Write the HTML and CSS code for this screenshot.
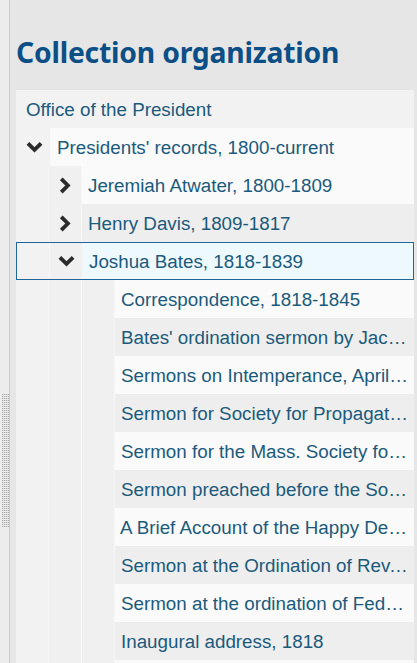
FILE: index.html
```html
<!DOCTYPE html>
<html>
<head>
<meta charset="utf-8">
<link rel="stylesheet" href="styles.css">
</head>
<body>
<div class="layout">
  <div class="gutter"><div class="handle"></div></div>
  <div class="panel">
    <h2 class="title">Collection organization</h2>
    <div class="tree">
      <div class="row level0">
        <div class="label">Office of the President</div>
      </div>
      <div class="row alt-light">
        <div class="cell toggle"><svg viewBox="0 0 16 11" class="chev-down"><path d="M1.8 2 L8 8.2 L14.2 2" /></svg></div>
        <div class="label">Presidents' records, 1800-current</div>
      </div>
      <div class="row alt-light">
        <div class="cell"></div>
        <div class="cell toggle"><svg viewBox="0 0 11 16" class="chev-right"><path d="M2 1.8 L8.2 8 L2 14.2" /></svg></div>
        <div class="label">Jeremiah Atwater, 1800-1809</div>
      </div>
      <div class="row alt-dark">
        <div class="cell"></div>
        <div class="cell toggle"><svg viewBox="0 0 11 16" class="chev-right"><path d="M2 1.8 L8.2 8 L2 14.2" /></svg></div>
        <div class="label">Henry Davis, 1809-1817</div>
      </div>
      <div class="row selected">
        <div class="cell"></div>
        <div class="cell toggle"><svg viewBox="0 0 16 11" class="chev-down"><path d="M1.8 2 L8 8.2 L14.2 2" /></svg></div>
        <div class="label">Joshua Bates, 1818-1839</div>
      </div>
      <div class="row alt-light child">
        <div class="cell"></div><div class="cell"></div><div class="cell"></div>
        <div class="label">Correspondence, 1818-1845</div>
      </div>
      <div class="row alt-dark child">
        <div class="cell"></div><div class="cell"></div><div class="cell"></div>
        <div class="label">Bates' ordination sermon by Jacob Ide, 1818</div>
      </div>
      <div class="row alt-light child">
        <div class="cell"></div><div class="cell"></div><div class="cell"></div>
        <div class="label">Sermons on Intemperance, April 1826</div>
      </div>
      <div class="row alt-dark child">
        <div class="cell"></div><div class="cell"></div><div class="cell"></div>
        <div class="label">Sermon for Society for Propagating the Gospel</div>
      </div>
      <div class="row alt-light child">
        <div class="cell"></div><div class="cell"></div><div class="cell"></div>
        <div class="label">Sermon for the Mass. Society for Promoting Christian Knowledge</div>
      </div>
      <div class="row alt-dark child">
        <div class="cell"></div><div class="cell"></div><div class="cell"></div>
        <div class="label">Sermon preached before the Society for Propagating the Gospel</div>
      </div>
      <div class="row alt-light child">
        <div class="cell"></div><div class="cell"></div><div class="cell"></div>
        <div class="label tight">A Brief Account of the Happy Death of Mary Ann Clap</div>
      </div>
      <div class="row alt-dark child">
        <div class="cell"></div><div class="cell"></div><div class="cell"></div>
        <div class="label">Sermon at the Ordination of Rev. Joseph Torrey</div>
      </div>
      <div class="row alt-light child">
        <div class="cell"></div><div class="cell"></div><div class="cell"></div>
        <div class="label">Sermon at the ordination of Federal Burt</div>
      </div>
      <div class="row alt-dark child">
        <div class="cell"></div><div class="cell"></div><div class="cell"></div>
        <div class="label">Inaugural address, 1818</div>
      </div>
      <div class="row alt-light child">
        <div class="cell"></div><div class="cell"></div><div class="cell"></div>
        <div class="label">Address at funeral, 1820</div>
      </div>
    </div>
  </div>
</div>
</body>
</html>
```

FILE: styles.css
```css
html, body {
  margin: 0;
  padding: 0;
  height: 663px;
  overflow: hidden;
  background: #e6e6e6;
}

.layout {
  display: flex;
  height: 663px;
  overflow: hidden;
}

.gutter {
  width: 10px;
  flex: none;
  background: #ececec;
  border-right: 1px solid #cbcbcb;
  display: flex;
  align-items: flex-start;
  justify-content: center;
  padding-top: 393px;
  box-sizing: border-box;
}

.handle {
  width: 7px;
  height: 134px;
  margin-left: 1px;
  background-image: repeating-linear-gradient(90deg, #a4a4a4 0 1px, #dadada 1px 2px);
  -webkit-mask-image: repeating-linear-gradient(0deg, #000 0 1px, transparent 1px 2px);
  mask-image: repeating-linear-gradient(0deg, #000 0 1px, transparent 1px 2px);
}

.panel {
  flex: 1;
  padding-left: 6px;
  padding-right: 3px;
  min-width: 0;
  overflow: hidden;
}

.title {
  margin: 0 0 21px 0;
  padding-top: 35px;
  font-family: "Noto Sans", sans-serif;
  font-weight: 700;
  font-size: 28.3px;
  line-height: 34px;
  color: #0b4f86;
  letter-spacing: -0.2px;
  white-space: nowrap;
}

.tree {
  background: #f0f0f0;
  font-family: "Liberation Sans", Arial, sans-serif;
  font-size: 18.8px;
  color: #1b5a7c;
}

.row {
  display: flex;
  height: 38px;
  box-sizing: border-box;
}

.cell {
  width: 32px;
  flex: none;
  border-right: 1px solid #f7f7f7;
  background: #f0f0f0;
  display: flex;
  align-items: center;
  justify-content: center;
}

.cell:first-child {
  background: #f2f2f2;
}

.label {
  flex: 1;
  min-width: 0;
  padding: 1px 5px 0 6px;
  white-space: nowrap;
  overflow: hidden;
  text-overflow: ellipsis;
  display: block;
  line-height: 37px;
}

.label.tight {
  padding-left: 5px;
}

.level0 .label {
  background: #f2f2f2;
  padding-left: 10px;
}

.alt-light .label { background: #fafafa; }
.alt-dark .label { background: #eeeeee; }

.selected {
  border: 1px solid #1f6598;
}

.selected .cell {
  height: 36px;
}

.selected .label {
  background: #eef9fe;
  line-height: 35px;
}

.chev-down {
  width: 17px;
  height: 12px;
}

.chev-right {
  width: 12px;
  height: 17px;
}

.chev-down path, .chev-right path {
  fill: none;
  stroke: #2b2b2b;
  stroke-width: 3.6;
  stroke-linecap: butt;
  stroke-linejoin: miter;
}

.row .toggle:first-child {
  padding-left: 2px;
}
```
